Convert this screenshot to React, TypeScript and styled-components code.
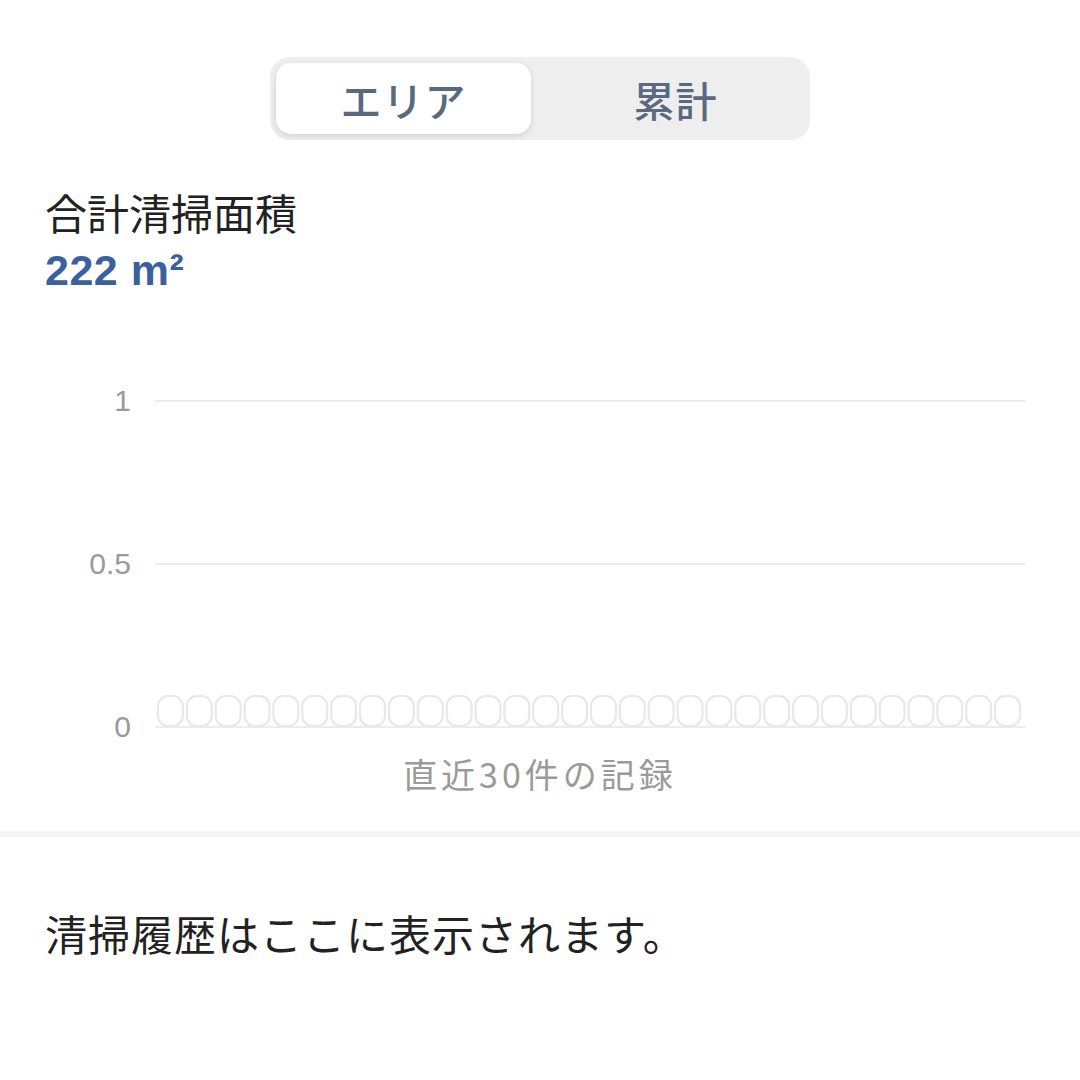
import { FC } from 'react';
import styled, { createGlobalStyle } from 'styled-components';

const BAR_COUNT = 30;
const PLOT_WIDTH = 870;
const PLOT_HEIGHT = 326;

const GlobalStyle = createGlobalStyle`
    body {
        margin: 0;
        background: #ffffff;
        font-family: "Noto Sans CJK JP", "Noto Sans", sans-serif;
        color: #222222;
    }
`

const Segmented: FC<{ tabs: string[]; active: number }> = ({ tabs, active }) => (
    <StyledSegmentWrap>
        <StyledSegmented>
            {tabs.map((tab, i) => (
                <StyledSegment key={tab} active={i === active}>{tab}</StyledSegment>
            ))}
        </StyledSegmented>
    </StyledSegmentWrap>
)

// 0件のバー：高さゼロでも枠だけ描かれる
const Chart: FC = () => {
    const pitch = (PLOT_WIDTH - 4) / BAR_COUNT;
    const bars = Array.from({ length: BAR_COUNT }, (_, i) => i);
    return (
        <StyledChart>
            <StyledAxis>
                {['1', '0.5', '0'].map((v) => (
                    <StyledTick key={v}><span>{v}</span></StyledTick>
                ))}
            </StyledAxis>
            <StyledPlot viewBox={`0 0 ${PLOT_WIDTH} ${PLOT_HEIGHT}`} width={PLOT_WIDTH} height={PLOT_HEIGHT}>
                {[0, PLOT_HEIGHT / 2, PLOT_HEIGHT].map((y) => (
                    <line key={y} x1={0} x2={PLOT_WIDTH} y1={y} y2={y} stroke="#ececec" strokeWidth={2} />
                ))}
                {bars.map((i) => (
                    <rect
                        key={i}
                        x={3 + i * pitch}
                        y={PLOT_HEIGHT - 31}
                        width={pitch - 4}
                        height={30}
                        rx={10}
                        fill="none"
                        stroke="#e8e8e8"
                        strokeWidth={2.2}
                    />
                ))}
            </StyledPlot>
        </StyledChart>
    )
}

const App: FC = () => {
    return (
        <StyledPage>
            <GlobalStyle />
            <Segmented tabs={['エリア', '累計']} active={0} />
            <StyledSection>
                <StyledTitle>合計清掃面積</StyledTitle>
                <StyledValue>222 m²</StyledValue>
                <Chart />
                <StyledXLabel>直近30件の記録</StyledXLabel>
            </StyledSection>
            <StyledDivider />
            <StyledSection>
                <StyledEmpty>清掃履歴はここに表示されます。</StyledEmpty>
            </StyledSection>
        </StyledPage>
    )
}

const StyledPage = styled.div`
    padding-top: 57px;
    width: 1080px;
`

const StyledSegmentWrap = styled.div`
    display: flex;
    justify-content: center;
`

const StyledSegmented = styled.div`
    display: grid;
    grid-template-columns: 255px 1fr;
    width: 540px;
    height: 83px;
    box-sizing: border-box;
    padding: 6px;
    background: #eeeeee;
    border-radius: 20px;
`

const StyledSegment = styled.div<{ active: boolean }>`
    display: flex;
    align-items: center;
    justify-content: center;
    padding-left: ${(p) => (p.active ? '0' : '16px')};
    font-size: 41px;
    font-weight: 500;
    letter-spacing: 1px;
    color: #5a6a7e;
    border-radius: 15px;
    background: ${(p) => (p.active ? '#ffffff' : 'transparent')};
    box-shadow: ${(p) => (p.active ? '0 2px 6px rgba(0, 0, 0, 0.12)' : 'none')};
`

const StyledSection = styled.div`
    padding: 0 55px 0 45px;
`

const StyledTitle = styled.div`
    margin-top: 46px;
    font-size: 42px;
    line-height: 52px;
    color: #222222;
`

const StyledValue = styled.div`
    margin-top: 6px;
    font-family: "Liberation Sans", Arial, sans-serif;
    font-weight: bold;
    font-size: 43px;
    line-height: 52px;
    letter-spacing: 0.5px;
    color: #3b5f9f;
`

const StyledChart = styled.div`
    display: grid;
    grid-template-columns: 86px ${PLOT_WIDTH}px;
    column-gap: 24px;
    margin-top: 105px;
`

const StyledAxis = styled.div`
    display: flex;
    flex-direction: column;
    justify-content: space-between;
    height: ${PLOT_HEIGHT}px;
`

const StyledTick = styled.div`
    height: 0;
    display: flex;
    align-items: center;
    justify-content: flex-end;
    font-family: "Liberation Sans", Arial, sans-serif;
    font-size: 30px;
    color: #9a9a9a;
`

const StyledPlot = styled.svg`
    display: block;
    overflow: visible;
`

const StyledXLabel = styled.div`
    margin: 27px 0 0 -45px;
    width: 1080px;
    text-align: center;
    font-size: 34px;
    line-height: 40px;
    letter-spacing: 4px;
    color: #9a9a9a;
`

const StyledDivider = styled.div`
    margin-top: 37px;
    height: 6px;
    background: #f5f5f5;
`

const StyledEmpty = styled.div`
    margin-top: 70px;
    font-size: 42px;
    line-height: 52px;
    letter-spacing: 1px;
    color: #222222;
`

export default App
